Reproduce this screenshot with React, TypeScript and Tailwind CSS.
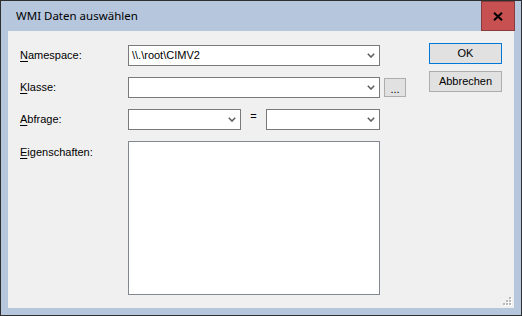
import React from "react";

const Chevron = () => (
  <svg width="8" height="5" viewBox="0 0 8 5" className="shrink-0">
    <polyline points="0.8,0.8 4,4 7.2,0.8" fill="none" stroke="#606060" strokeWidth="1.6" />
  </svg>
);

const Combo = ({ w, text }: { w: string; text?: string }) => (
  <div className={`${w} h-[21px] bg-white border border-[#7a7a7a] flex items-center pl-[3px] pr-[4px]`}>
    <span className="flex-1 text-[11px] leading-none text-black whitespace-nowrap">{text}</span>
    <Chevron />
  </div>
);

const Label = ({ first, rest }: { first: string; rest: string }) => (
  <span className="text-[11px] text-black leading-none">
    <span className="underline underline-offset-[2px]">{first}</span>
    {rest}
  </span>
);

export default function App() {
  return (
    <div
      className="w-[522px] h-[316px] border border-[#2f2f2f] bg-[#b5c6dd] flex flex-col"
      style={{ fontFamily: '"Liberation Sans", Arial, sans-serif' }}
    >
      {/* Title bar */}
      <div className="h-[30px] flex items-center shrink-0">
        <span
          className="ml-[15px] text-[11.5px] text-black flex-1"
          style={{ fontFamily: '"Noto Sans", "Liberation Sans", sans-serif' }}
        >
          WMI Daten auswählen
        </span>
        <div className="w-[34px] h-[30px] bg-[#c75050] border border-[#8a3c3c] mr-[6px] flex items-center justify-center">
          <svg width="10" height="9" viewBox="0 0 10 9">
            <path d="M1 0.8 L9 8.2 M9 0.8 L1 8.2" stroke="#000" strokeWidth="2" />
          </svg>
        </div>
      </div>
      {/* Client area */}
      <div className="mx-[7px] w-[506px] h-[277px] bg-[#f0f0f0] relative flex pt-[12px] pl-[12px]">
        <div className="w-[409px] mt-[2px] flex flex-col gap-[11px]">
          <div className="flex items-center h-[21px]">
            <div className="w-[108px] text-[11px] leading-none"><Label first="N" rest="amespace:" /></div>
            <Combo w="w-[252px]" text={"\\\\.\\root\\CIMV2"} />
          </div>
          <div className="flex items-center h-[21px]">
            <div className="w-[108px] text-[11px] leading-none"><Label first="K" rest="lasse:" /></div>
            <Combo w="w-[252px]" />
            <div className="ml-[4px] w-[22px] h-[19px] bg-[#e1e1e1] border border-[#adadad] flex items-end justify-center text-[11px] leading-[14px] text-black">
              ...
            </div>
          </div>
          <div className="flex items-center h-[21px]">
            <div className="w-[108px] text-[11px] leading-none"><Label first="A" rest="bfrage:" /></div>
            <Combo w="w-[113px]" />
            <div className="w-[25px] text-center text-[11px] leading-none text-black -mt-[6px]">=</div>
            <Combo w="w-[114px]" />
          </div>
          <div className="flex items-start">
            <div className="w-[108px] pt-[6px] text-[11px] leading-none"><Label first="E" rest="igenschaften:" /></div>
            <div className="w-[252px] h-[154px] bg-white border border-[#828790]" />
          </div>
        </div>
        <div className="flex flex-col gap-[7px]">
          <div className="w-[73px] h-[21px] bg-[#e1e1e1] border border-[#0078d7] flex items-center justify-center text-[11px] text-black">
            OK
          </div>
          <div className="w-[73px] h-[21px] bg-[#e1e1e1] border border-[#adadad] flex items-center justify-center text-[11px] text-black">
            Abbrechen
          </div>
        </div>
        <svg className="absolute right-[2px] bottom-[2px]" width="10" height="10" viewBox="0 0 10 10">
          {[
            [7, 1],
            [4, 4], [7, 4],
            [1, 7], [4, 7], [7, 7],
          ].map(([x, y], i) => (
            <g key={i}>
              <rect x={x + 1} y={y + 1} width="2" height="2" fill="#ffffff" />
              <rect x={x} y={y} width="2" height="2" fill="#b8b8b8" />
            </g>
          ))}
        </svg>
      </div>
    </div>
  );
}
